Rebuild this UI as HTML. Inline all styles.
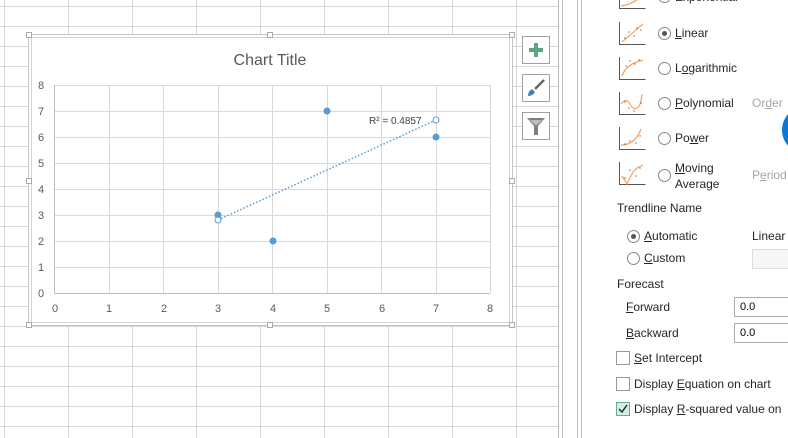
<!DOCTYPE html>
<html><head><style>
body{margin:0;width:788px;height:438px;overflow:hidden;background:#fff;font-family:"Liberation Sans",sans-serif;position:relative}
.t{position:absolute;font-size:12px;color:#262626;white-space:nowrap}
.g{color:#a6a6a6}
u{text-decoration:underline}
.rad{position:absolute;width:11px;height:11px;border:1px solid #888;border-radius:50%;background:#fff}
.rad.on::after{content:"";position:absolute;left:3px;top:3px;width:5px;height:5px;border-radius:50%;background:#555}
.box{position:absolute;border:1px solid #abadb3;background:#fff;font-size:11px;color:#000;padding-left:5px;box-sizing:border-box;line-height:18px}
.cb{position:absolute;width:12px;height:12px;border:1px solid #999;background:#fff}
</style></head><body>
<svg width="788" height="438" style="position:absolute;left:0;top:0">
<g stroke="#d6d6d6" stroke-width="1">
<line x1="4.5" y1="0" x2="4.5" y2="438"/>
<line x1="68.5" y1="0" x2="68.5" y2="438"/><line x1="132.5" y1="0" x2="132.5" y2="438"/><line x1="196.5" y1="0" x2="196.5" y2="438"/><line x1="260.5" y1="0" x2="260.5" y2="438"/><line x1="324.5" y1="0" x2="324.5" y2="438"/><line x1="388.5" y1="0" x2="388.5" y2="438"/><line x1="452.5" y1="0" x2="452.5" y2="438"/><line x1="516.5" y1="0" x2="516.5" y2="438"/>
<line x1="0" y1="6.5" x2="558" y2="6.5"/><line x1="0" y1="26.5" x2="558" y2="26.5"/><line x1="0" y1="46.5" x2="558" y2="46.5"/><line x1="0" y1="66.5" x2="558" y2="66.5"/><line x1="0" y1="86.5" x2="558" y2="86.5"/><line x1="0" y1="106.5" x2="558" y2="106.5"/><line x1="0" y1="126.5" x2="558" y2="126.5"/><line x1="0" y1="146.5" x2="558" y2="146.5"/><line x1="0" y1="166.5" x2="558" y2="166.5"/><line x1="0" y1="186.5" x2="558" y2="186.5"/><line x1="0" y1="206.5" x2="558" y2="206.5"/><line x1="0" y1="226.5" x2="558" y2="226.5"/><line x1="0" y1="246.5" x2="558" y2="246.5"/><line x1="0" y1="266.5" x2="558" y2="266.5"/><line x1="0" y1="286.5" x2="558" y2="286.5"/><line x1="0" y1="306.5" x2="558" y2="306.5"/><line x1="0" y1="326.5" x2="558" y2="326.5"/><line x1="0" y1="346.5" x2="558" y2="346.5"/><line x1="0" y1="366.5" x2="558" y2="366.5"/><line x1="0" y1="386.5" x2="558" y2="386.5"/><line x1="0" y1="406.5" x2="558" y2="406.5"/><line x1="0" y1="426.5" x2="558" y2="426.5"/>
</g>
<g stroke="#bdbdbd"><line x1="558.5" y1="0" x2="558.5" y2="438"/><line x1="562.5" y1="0" x2="562.5" y2="438"/><line x1="577.5" y1="0" x2="577.5" y2="438"/><line x1="581.5" y1="0" x2="581.5" y2="438"/></g>
<!-- chart -->
<rect x="28.5" y="34.5" width="484" height="291" fill="#fff" stroke="#c4c4c4"/>
<rect x="31.5" y="37.5" width="478" height="285" fill="#fff" stroke="#d4d4d4"/>
<g fill="#fff" stroke="#aaa"><rect x="26.5" y="32.5" width="5" height="5"/><rect x="267.5" y="32.5" width="5" height="5"/><rect x="509.5" y="32.5" width="5" height="5"/><rect x="26.5" y="178.5" width="5" height="5"/><rect x="509.5" y="178.5" width="5" height="5"/><rect x="26.5" y="322.5" width="5" height="5"/><rect x="267.5" y="322.5" width="5" height="5"/><rect x="509.5" y="322.5" width="5" height="5"/></g>
<text x="270" y="65" font-size="16" fill="#595959" text-anchor="middle" font-family="Liberation Sans">Chart Title</text>
<g stroke="#d9d9d9">
<line x1="54" y1="85.5" x2="490" y2="85.5"/><line x1="54" y1="111.5" x2="490" y2="111.5"/><line x1="54" y1="137.5" x2="490" y2="137.5"/><line x1="54" y1="163.5" x2="490" y2="163.5"/><line x1="54" y1="189.5" x2="490" y2="189.5"/><line x1="54" y1="215.5" x2="490" y2="215.5"/><line x1="54" y1="241.5" x2="490" y2="241.5"/><line x1="54" y1="267.5" x2="490" y2="267.5"/>
<line x1="109.5" y1="85" x2="109.5" y2="293"/><line x1="163.5" y1="85" x2="163.5" y2="293"/><line x1="218.5" y1="85" x2="218.5" y2="293"/><line x1="272.5" y1="85" x2="272.5" y2="293"/><line x1="327.5" y1="85" x2="327.5" y2="293"/><line x1="381.5" y1="85" x2="381.5" y2="293"/><line x1="436.5" y1="85" x2="436.5" y2="293"/><line x1="490.5" y1="85" x2="490.5" y2="293"/>
</g>
<g stroke="#bfbfbf"><line x1="54.5" y1="85" x2="54.5" y2="293"/><line x1="54" y1="293.5" x2="490" y2="293.5"/></g>
<g font-size="11" fill="#595959" font-family="Liberation Sans" text-anchor="middle">
<text x="41" y="89">8</text><text x="41" y="115">7</text><text x="41" y="141">6</text><text x="41" y="167">5</text><text x="41" y="193">4</text><text x="41" y="219">3</text><text x="41" y="245">2</text><text x="41" y="271">1</text><text x="41" y="297">0</text>
<text x="55" y="312">0</text><text x="109" y="312">1</text><text x="164" y="312">2</text><text x="218" y="312">3</text><text x="273" y="312">4</text><text x="327" y="312">5</text><text x="382" y="312">6</text><text x="436" y="312">7</text><text x="490" y="312">8</text>
</g>
<line x1="218" y1="220" x2="436" y2="120" stroke="#5b9bd5" stroke-width="1.5" stroke-dasharray="1.5 2"/>
<g fill="#5b9bd5"><circle cx="218" cy="215" r="3.5"/><circle cx="273" cy="241" r="3.5"/><circle cx="327" cy="111" r="3.5"/><circle cx="436" cy="137" r="3.5"/></g>
<g fill="#fff" stroke="#5b9bd5" stroke-width="1"><circle cx="218" cy="220" r="3"/><circle cx="436" cy="120" r="3"/></g>
<text x="369" y="124" font-size="10" fill="#404040" font-family="Liberation Sans">R² = 0.4857</text>
<!-- buttons -->
<g fill="#fff" stroke="#a0a0a0"><rect x="522.5" y="36.5" width="27" height="27"/><rect x="522.5" y="74.5" width="27" height="27"/><rect x="522.5" y="112.5" width="27" height="27"/></g>
<path d="M536 43v14M529 50h14" stroke="#5aa383" stroke-width="4"/>
<path d="M528 96q0-5 4-7l3 3q-2 4-7 4z" fill="#4f7fba"/><path d="M535 89l9-9" stroke="#666" stroke-width="2.5"/>
<path d="M527 118h18l-7 8v9h-4v-9z" fill="#808080"/><path d="M530 120h12l-5 5h-2z" fill="#bbb"/>
<!-- trend icons -->
<g fill="none" stroke="#555" stroke-width="1">
<path d="M619.5 -14v22.5h26"/><path d="M619.5 22v22.5h26"/><path d="M619.5 57v22.5h26"/><path d="M619.5 92v22.5h26"/><path d="M619.5 127v22.5h26"/><path d="M619.5 162v22.5h26"/>
</g>
<g fill="none" stroke="#f4a261" stroke-width="1.2">
<path d="M621 6q14 -2 22 -12"/>
<path d="M622 42l21-18"/>
<path d="M622 76q4-12 21-16"/>
<path d="M621 104q5-7 9 0t7 4q4-2 5-14"/>
<path d="M621 145q14 0 20-16"/>
<path d="M622 176l5 8 6-12 4-4 6-3"/>
</g>
<g fill="#333"><circle cx="625" cy="38" r=".6"/><circle cx="629" cy="32" r=".6"/><circle cx="634" cy="36" r=".6"/><circle cx="637" cy="28" r=".6"/><circle cx="641" cy="30" r=".6"/>
<circle cx="626" cy="66" r=".6"/><circle cx="630" cy="61" r=".6"/><circle cx="635" cy="64" r=".6"/><circle cx="639" cy="60" r=".6"/>
<circle cx="625" cy="102" r=".6"/><circle cx="629" cy="108" r=".6"/><circle cx="634" cy="111" r=".6"/><circle cx="641" cy="103" r=".6"/>
<circle cx="625" cy="144" r=".6"/><circle cx="630" cy="141" r=".6"/><circle cx="636" cy="143" r=".6"/><circle cx="640" cy="136" r=".6"/>
<circle cx="625" cy="178" r=".6"/><circle cx="630" cy="170" r=".6"/><circle cx="636" cy="176" r=".6"/><circle cx="640" cy="168" r=".6"/></g>
<circle cx="806" cy="130" r="24" fill="#0a78d7"/>
</svg>
<div class="rad" style="left:658px;top:-10px"></div><div class="t" style="left:675px;top:-10px">Exponential</div>
<div class="rad on" style="left:658px;top:27px"></div><div class="t" style="left:675px;top:26px"><u>L</u>inear</div>
<div class="rad" style="left:658px;top:62px"></div><div class="t" style="left:675px;top:61px">L<u>o</u>garithmic</div>
<div class="rad" style="left:658px;top:97px"></div><div class="t" style="left:675px;top:96px"><u>P</u>olynomial</div><div class="t g" style="left:752px;top:96px">Or<u>d</u>er</div>
<div class="rad" style="left:658px;top:132px"></div><div class="t" style="left:675px;top:131px">Po<u>w</u>er</div>
<div class="rad" style="left:658px;top:169px"></div><div class="t" style="left:675px;top:160px;line-height:16px"><u>M</u>oving<br>Average</div><div class="t g" style="left:752px;top:168px">P<u>e</u>riod</div>
<div class="t" style="left:617px;top:201px">Trendline Name</div>
<div class="rad on" style="left:627px;top:230px"></div><div class="t" style="left:644px;top:229px"><u>A</u>utomatic</div><div class="t" style="left:752px;top:229px">Linear</div>
<div class="rad" style="left:627px;top:252px"></div><div class="t" style="left:644px;top:251px"><u>C</u>ustom</div>
<div class="box" style="left:752px;top:249px;width:40px;height:20px;border-color:#ddd;background:#f7f7f7"></div>
<div class="t" style="left:617px;top:277px">Forecast</div>
<div class="t" style="left:626px;top:300px"><u>F</u>orward</div><div class="box" style="left:734px;top:297px;width:60px;height:20px">0.0</div>
<div class="t" style="left:626px;top:326px"><u>B</u>ackward</div><div class="box" style="left:734px;top:323px;width:60px;height:20px">0.0</div>
<div class="cb" style="left:616px;top:351px"></div><div class="t" style="left:634px;top:351px"><u>S</u>et Intercept</div>
<div class="cb" style="left:616px;top:377px"></div><div class="t" style="left:634px;top:377px">Display <u>E</u>quation on chart</div>
<div class="cb" style="left:616px;top:402px;background:#d4ede0;border-color:#6a9"><svg width="12" height="12" style="position:absolute;left:0;top:0"><path d="M2 6l3 3 5-7" fill="none" stroke="#222" stroke-width="1.4"/></svg></div><div class="t" style="left:634px;top:402px">Display <u>R</u>-squared value on</div>
</body></html>
